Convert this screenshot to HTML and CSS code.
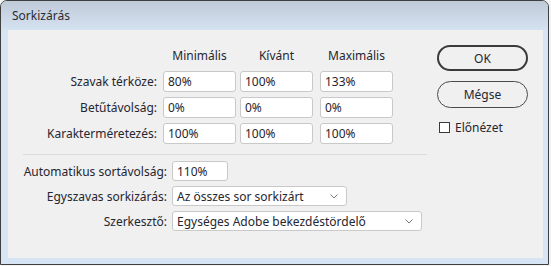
FILE: index.html
```html
<!DOCTYPE html>
<html lang="hu">
<head>
  <meta charset="UTF-8" />
  <title>Sorkizárás</title>
  <link rel="stylesheet" href="styles.css">
</head>
<body>

<div class="ablak">
  <div class="cimsor">Sorkizárás</div>

  <div class="tartalom">
    <div class="bal">
      <div class="racs">
        <div></div>
        <div class="fejlec">Minimális</div>
        <div class="fejlec">Kívánt</div>
        <div class="fejlec">Maximális</div>

        <div class="cimke">Szavak térköze:</div>
        <input class="mezo" type="text" value="80%">
        <input class="mezo" type="text" value="100%">
        <input class="mezo" type="text" value="133%">

        <div class="cimke">Betűtávolság:</div>
        <input class="mezo" type="text" value="0%">
        <input class="mezo" type="text" value="0%">
        <input class="mezo" type="text" value="0%">

        <div class="cimke">Karakterméretezés:</div>
        <input class="mezo" type="text" value="100%">
        <input class="mezo" type="text" value="100%">
        <input class="mezo" type="text" value="100%">
      </div>

      <div class="elvalaszto"></div>

      <div class="also">
        <div class="cimke">Automatikus sortávolság:</div>
        <div><input class="mezo kicsi" type="text" value="110%"></div>

        <div class="cimke">Egyszavas sorkizárás:</div>
        <div class="legordulo kozepes">
          <span>Az összes sor sorkizárt</span>
          <svg width="8" height="5" viewBox="0 0 8 5"><path d="M0.5 0.5 L4 4 L7.5 0.5" fill="none" stroke="#7a7a7a" stroke-width="1"/></svg>
        </div>

        <div class="cimke">Szerkesztő:</div>
        <div class="legordulo szeles">
          <span>Egységes Adobe bekezdéstördelő</span>
          <svg width="8" height="5" viewBox="0 0 8 5"><path d="M0.5 0.5 L4 4 L7.5 0.5" fill="none" stroke="#7a7a7a" stroke-width="1"/></svg>
        </div>
      </div>
    </div>

    <div class="jobb">
      <button class="gomb alap">OK</button>
      <button class="gomb">Mégse</button>
      <label class="jelolo"><span class="doboz"></span>Előnézet</label>
    </div>
  </div>
</div>

</body>
</html>
```

FILE: styles.css
```css
body {
  margin: 0;
  padding: 0;
  background-color: #f3f3f3;
  font-family: "Noto Sans", "Open Sans", sans-serif;
  font-size: 12px;
  color: #262630;
}

.ablak {
  width: 549px;
  height: 265px;
  box-sizing: border-box;
  border: 1px solid #3f3f3f;
  border-radius: 7px 7px 0 0;
  background-color: #d6e4f3;
  overflow: hidden;
}

.cimsor {
  height: 29px;
  box-sizing: border-box;
  padding: 6px 0 0 11px;
  background: linear-gradient(#bfcad7, #d5e2f1);
  color: #2b2b33;
  font-size: 12px;
}

.tartalom {
  margin-left: 7px;
  width: 535px;
  height: 228px;
  background-color: #f0f0f0;
  display: flex;
}

.bal {
  width: 429px;
}

.racs {
  margin-top: 15px;
  display: grid;
  grid-template-columns: 155px 77px 80px 74px;
  grid-template-rows: 21px 21px 21px 21px;
  row-gap: 5px;
  align-items: center;
}

.fejlec {
  text-align: center;
  width: 73px;
}

.cimke {
  text-align: right;
  padding-right: 6px;
  white-space: nowrap;
}

.mezo {
  width: 73px;
  height: 21px;
  box-sizing: border-box;
  margin: 0;
  padding: 0 4px;
  border: 1px solid #c9c9c9;
  border-radius: 3px;
  background-color: #fff;
  font-family: inherit;
  font-size: 12px;
  color: #262630;
}

.elvalaszto {
  margin: 10px 0 0 15px;
  width: 404px;
  height: 1px;
  background-color: #dadada;
}

.also {
  margin-top: 6px;
  display: grid;
  grid-template-columns: 164px auto;
  grid-template-rows: 20px 20px 20px;
  row-gap: 5px;
  align-items: center;
}

.also .cimke {
  padding-right: 5px;
}

.mezo.kicsi {
  width: 56px;
  height: 20px;
}

.legordulo {
  height: 20px;
  box-sizing: border-box;
  padding: 0 8px 0 4px;
  border: 1px solid #c9c9c9;
  border-radius: 3px;
  background-color: #fff;
  display: flex;
  align-items: center;
  justify-content: space-between;
}

.kozepes {
  width: 175px;
}

.szeles {
  width: 250px;
}

.jobb {
  padding-top: 15px;
  display: flex;
  flex-direction: column;
  align-items: flex-start;
}

.gomb {
  width: 91px;
  height: 27px;
  box-sizing: border-box;
  margin: 0 0 10px 0;
  border: 1px solid #4a4a4a;
  border-radius: 14px;
  background-color: #f0f0f0;
  font-family: inherit;
  font-size: 12px;
  color: #262630;
}

.gomb.alap {
  height: 26px;
  border: 2px solid #3a3a3a;
}

.jelolo {
  margin-top: 1px;
  margin-left: 2px;
  display: flex;
  align-items: center;
  gap: 5px;
}

.doboz {
  width: 11px;
  height: 11px;
  box-sizing: border-box;
  border: 1px solid #3a3a3a;
  background-color: #fff;
}
```
